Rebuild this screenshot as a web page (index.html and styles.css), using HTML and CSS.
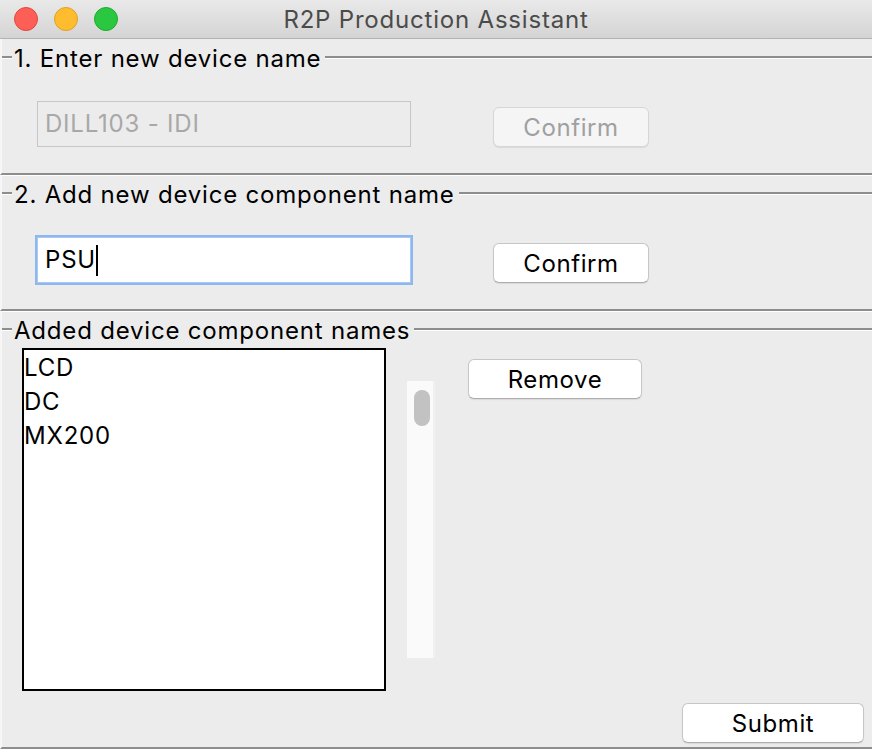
FILE: index.html
```html
<!DOCTYPE html>
<html>
<head>
<meta charset="utf-8">
<link rel="stylesheet" href="styles.css">
</head>
<body>
<div class="window">
  <div class="titlebar">
    <div class="lights">
      <span class="light red"></span>
      <span class="light yellow"></span>
      <span class="light green"></span>
    </div>
    <div class="title">R2P Production Assistant</div>
    <div></div>
  </div>

  <section class="group">
    <div class="legend"><span class="dash"></span><span class="legend-text">1. Enter new device name</span><span class="rule"></span></div>
    <div class="row">
      <div class="field disabled">DILL103 - IDI</div>
      <button class="btn confirm disabled">Confirm</button>
    </div>
  </section>

  <section class="group">
    <div class="legend"><span class="dash"></span><span class="legend-text">2. Add new device component name</span><span class="rule"></span></div>
    <div class="row">
      <div class="field focus">PSU<span class="caret"></span></div>
      <button class="btn confirm">Confirm</button>
    </div>
  </section>

  <section class="group last">
    <div class="legend"><span class="dash"></span><span class="legend-text">Added device component names</span><span class="rule"></span></div>
    <div class="list-row">
      <div class="listbox">
        <div class="item">LCD</div>
        <div class="item">DC</div>
        <div class="item">MX200</div>
      </div>
      <div class="scrollbar"><div class="thumb"></div></div>
      <button class="btn remove">Remove</button>
    </div>
    <div class="submit-row">
      <button class="btn submit">Submit</button>
    </div>
  </section>
</div>
</body>
</html>
```

FILE: styles.css
```css
html, body {
  margin: 0;
  padding: 0;
  background: #ececec;
  overflow: hidden;
}
body {
  font-family: "Inter", "Liberation Sans", sans-serif;
  font-size: 24px;
  letter-spacing: 0.8px;
  color: #000;
}
.window {
  width: 872px;
  height: 750px;
  background: #ececec;
}
.titlebar {
  height: 38px;
  border-bottom: 1px solid #b3b3b3;
  background: linear-gradient(#e9e9e9, #d4d4d4);
  display: grid;
  grid-template-columns: 1fr auto 1fr;
  align-items: center;
}
.lights {
  display: flex;
  gap: 16px;
  padding-left: 14px;
}
.light {
  width: 24px;
  height: 24px;
  border-radius: 50%;
  box-sizing: border-box;
}
.red { background: #fd5f57; border: 1px solid #e1463f; }
.yellow { background: #febc2e; border: 1px solid #dfa123; }
.green { background: #2ac840; border: 1px solid #1dab2b; }
.title {
  color: #4b4b4b;
  font-size: 24px;
  letter-spacing: 0.8px;
}
.group {
  border-left: 2px solid #f6f6f6;
  border-bottom: 2px solid #8d8d8d;
  box-shadow: 0 1px 0 #ffffff;
  padding-bottom: 26px;
}
.group.last {
  padding-bottom: 4px;
}
.legend {
  height: 40px;
  display: flex;
  align-items: center;
}
.dash, .rule {
  height: 0;
  border-top: 2px solid #8d8d8d;
  border-bottom: 1px solid #ffffff;
  margin-top: -3px;
}
.dash { width: 10px; }
.rule { flex: 1; }
.legend-text {
  padding: 0 4px 0 2px;
  line-height: 40px;
}
.row {
  display: flex;
  align-items: flex-end;
  margin-top: 22px;
}
.field {
  box-sizing: border-box;
  width: 374px;
  height: 46px;
  margin-left: 35px;
  border: 1px solid #c7c7c7;
  padding-left: 7px;
  display: flex;
  align-items: center;
  line-height: 1;
}
.field.disabled {
  color: #a8a8a8;
  background: #ececec;
}
.field.focus {
  background: #ffffff;
  border-color: #a9c9f3;
  outline: 2px solid #8db7ef;
  outline-offset: 0;
}
.caret {
  display: inline-block;
  width: 2px;
  height: 31px;
  background: #000;
  margin-left: 0;
}
.btn {
  font-family: "Inter", "Liberation Sans", sans-serif;
  font-size: 24px;
  letter-spacing: 0.6px;
  color: #000;
  background: #ffffff;
  border: 1px solid #c6c6c6;
  border-bottom-color: #adadad;
  border-radius: 6px;
  height: 40px;
  padding: 0;
  box-shadow: 0 1px 1px rgba(0, 0, 0, 0.08);
  box-sizing: border-box;
}
.btn.confirm {
  width: 156px;
  margin-left: 82px;
}
.btn.disabled {
  color: #a0a0a0;
  background: #f5f5f5;
  border-color: #d6d6d6;
}
.list-row {
  display: flex;
  align-items: flex-start;
  margin-top: -3px;
}
.listbox {
  box-sizing: border-box;
  width: 364px;
  height: 343px;
  margin-left: 20px;
  border: 2px solid #000;
  background: #ffffff;
  padding: 1px 0 0 0;
}
.item {
  line-height: 34px;
  height: 34px;
}
.scrollbar {
  box-sizing: border-box;
  width: 28px;
  height: 277px;
  margin-left: 21px;
  margin-top: 33px;
  background: #fafafa;
  border-right: 2px solid #f1f1f1;
  padding: 9px 0 0 7px;
}
.thumb {
  width: 16px;
  height: 36px;
  border-radius: 8px;
  background: #c2c2c2;
}
.btn.remove {
  width: 174px;
  margin-left: 33px;
  margin-top: 11px;
}
.submit-row {
  display: flex;
  justify-content: flex-end;
  margin-top: 12px;
  padding-right: 8px;
}
.btn.submit {
  width: 182px;
}
```
